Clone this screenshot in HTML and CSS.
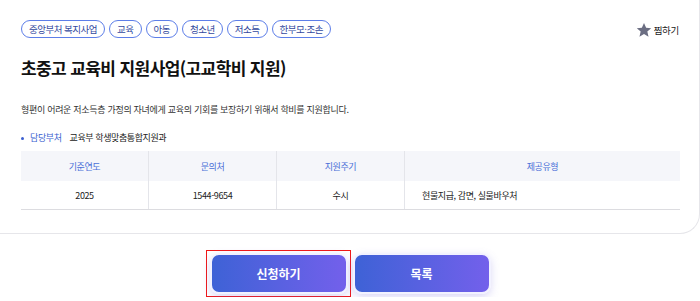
FILE: index.html
```html
<!DOCTYPE html>
<html lang="ko">
<head>
    <meta charset="UTF-8">
    <meta name="viewport" content="width=device-width, initial-scale=1.0">
    <title>초중고 교육비 지원사업</title>
    <link rel="stylesheet" href="styles.css">
</head>
<body>

<div class="card">
    <div class="top-row">
        <ul class="tags">
            <li>중앙부처 복지사업</li>
            <li>교육</li>
            <li>아동</li>
            <li>청소년</li>
            <li>저소득</li>
            <li>한부모·조손</li>
        </ul>
        <button class="bookmark">
            <svg width="16" height="16" viewBox="0 0 24 24"><path d="M12 1.5l3.2 7.1 7.6.7-5.8 5.1 1.8 7.6L12 18l-6.8 4 1.8-7.6-5.8-5.1 7.6-.7z" fill="#6b6e82"/></svg>
            찜하기
        </button>
    </div>

    <h1 class="title">초중고 교육비 지원사업(고교학비 지원)</h1>

    <p class="desc">형편이 어려운 저소득층 가정의 자녀에게 교육의 기회를 보장하기 위해서 학비를 지원합니다.</p>

    <div class="dept">
        <span class="dept-label">담당부처</span>
        <span class="dept-name">교육부 학생맞춤통합지원과</span>
    </div>

    <table class="info">
        <thead>
            <tr>
                <th class="c1">기준연도</th>
                <th class="c2">문의처</th>
                <th class="c3">지원주기</th>
                <th>제공유형</th>
            </tr>
        </thead>
        <tbody>
            <tr>
                <td>2025</td>
                <td>1544-9654</td>
                <td>수시</td>
                <td class="left">현물지급, 감면, 실물바우처</td>
            </tr>
        </tbody>
    </table>
</div>

<div class="actions">
    <span class="focus-box"><button class="btn">신청하기</button></span>
    <button class="btn">목록</button>
</div>

</body>
</html>
```

FILE: styles.css
```css
body {
    margin: 0;
    font-family: "Noto Sans CJK KR", "Noto Sans", sans-serif;
    color: #222;
    background: #fff;
}
.card {
    width: 700px;
    height: 234px;
    padding: 20px 0 0 21px;
    box-sizing: border-box;
    border-right: 1px solid #e6e6ea;
    border-bottom: 1px solid #e6e6ea;
    border-bottom-right-radius: 20px;
}
.top-row {
    display: flex;
    justify-content: space-between;
    align-items: center;
    height: 18px;
    padding-right: 20px;
}
.tags {
    display: flex;
    gap: 4px;
    list-style: none;
    margin: 0;
    padding: 0;
}
.tags li {
    height: 18px;
    line-height: 16px;
    box-sizing: border-box;
    padding: 0 7px;
    border: 1px solid #5d7ee8;
    border-radius: 10px;
    font-size: 9.5px;
    color: #33499e;
    letter-spacing: -0.5px;
}
.bookmark {
    display: flex;
    align-items: center;
    gap: 2px;
    border: 0;
    background: none;
    padding: 0;
    font-family: inherit;
    font-size: 9.5px;
    line-height: 16px;
    letter-spacing: -0.3px;
    color: #222;
    margin-top: 2px;
}
.title {
    margin: 18px 0 0;
    font-size: 17px;
    font-weight: 700;
    line-height: 24px;
    letter-spacing: -0.6px;
    color: #111;
}
.desc {
    margin: 23px 0 0;
    font-size: 9px;
    line-height: 14px;
    color: #333;
    letter-spacing: -0.3px;
}
.dept {
    margin-top: 14px;
    font-size: 9px;
    line-height: 14px;
    letter-spacing: -0.4px;
    display: flex;
    gap: 8px;
}
.dept-label {
    color: #3b5fd0;
    position: relative;
    padding-left: 9px;
}
.dept-label::before {
    content: "";
    position: absolute;
    left: 0;
    top: 6px;
    width: 3px;
    height: 3px;
    border-radius: 50%;
    background: #3b5fd0;
}
.dept-name {
    color: #222;
}
.info {
    margin-top: 6px;
    width: 659px;
    border-collapse: collapse;
    font-size: 9px;
    letter-spacing: -0.4px;
}
.info th {
    height: 30px;
    background: #f5f6fa;
    color: #4a6fd8;
    font-weight: 400;
    border-left: 1px solid #e4e5ea;
    padding: 0;
}
.info td {
    height: 28px;
    text-align: center;
    color: #222;
    border-left: 1px solid #e4e5ea;
    border-bottom: 1px solid #dcdce0;
    padding: 0;
}
.info th:first-child,
.info td:first-child {
    border-left: 0;
}
.info .c1, .info .c2, .info .c3 {
    width: 127px;
}
.info td.left {
    text-align: left;
    padding-left: 17px;
}
.actions {
    display: flex;
    justify-content: center;
    gap: 2px;
    margin-top: 16px;
    padding-right: 4px;
}
.focus-box {
    display: block;
    padding: 2px 2px 2px 3px;
    border: 1px solid #f01818;
}
.btn {
    display: block;
    width: 138px;
    height: 41px;
    border: 2px solid #f2f2ff;
    border-radius: 9px;
    background: linear-gradient(90deg, #3e62d6, #7360eb);
    color: #fff;
    font-family: inherit;
    font-size: 12px;
    font-weight: 700;
    box-shadow: 0 3px 8px rgba(110, 100, 220, 0.25);
}
.actions > .btn {
    margin-top: 3px;
}
```
